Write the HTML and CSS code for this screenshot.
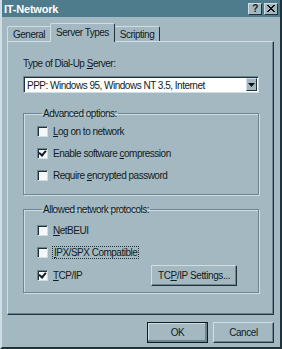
FILE: index.html
```html
<!DOCTYPE html>
<html lang="en">
<head>
  <meta charset="UTF-8" />
  <title>IT-Network</title>
  <link rel="stylesheet" href="styles.css">
</head>
<body>
  <div class="window">
    <div class="titlebar">
      <span class="title">IT-Network</span>
      <div class="title-btns">
        <span class="tbtn">?</span>
        <span class="tbtn">
          <svg width="8" height="7" viewBox="0 0 8 7"><path d="M0 0L7 7M1 0L8 7M7 0L0 7M8 0L1 7" stroke="#111" stroke-width="1"/></svg>
        </span>
      </div>
    </div>

    <div class="tabs">
      <div class="tab">General</div>
      <div class="tab active">Server Types</div>
      <div class="tab">Scripting</div>
    </div>

    <div class="panel">
      <div class="field-label">Type of Dial-Up <u>S</u>erver:</div>
      <div class="combo">
        <span class="combo-text">PPP: Windows 95, Windows NT 3.5, Internet</span>
        <span class="combo-btn">
          <svg width="7" height="4" viewBox="0 0 7 4"><path d="M0 0H7L3.5 4Z" fill="#111"/></svg>
        </span>
      </div>

      <fieldset class="group group-adv">
        <legend>Advanced options:</legend>
        <label class="check-row"><span class="check"></span><span><u>L</u>og on to network</span></label>
        <label class="check-row"><span class="check checked"></span><span>Enable software <u>c</u>ompression</span></label>
        <label class="check-row"><span class="check"></span><span>Require <u>e</u>ncrypted password</span></label>
      </fieldset>

      <fieldset class="group group-proto">
        <legend>Allowed network protocols:</legend>
        <label class="check-row"><span class="check"></span><span><u>N</u>etBEUI</span></label>
        <label class="check-row"><span class="check"></span><span class="focus"><u>I</u>PX/SPX Compatible</span></label>
        <div class="proto-last">
          <label class="check-row"><span class="check checked"></span><span><u>T</u>CP/IP</span></label>
          <button class="btn settings-btn">TC<u>P</u>/IP Settings...</button>
        </div>
      </fieldset>
    </div>

    <div class="actions">
      <button class="btn default">OK</button>
      <button class="btn">Cancel</button>
    </div>
  </div>
</body>
</html>
```

FILE: styles.css
```css
* {
  box-sizing: border-box;
}
body {
  margin: 0;
  font-family: "Liberation Sans", Arial, sans-serif;
  font-size: 10px;
  letter-spacing: -0.5px;
  color: #101c22;
  background: #a4b8c2;
}
.window {
  width: 282px;
  height: 349px;
  background: #a4b8c2;
  border-left: 2px solid #d0dde3;
  border-right: 2px solid #22323a;
  border-bottom: 2px solid #22323a;
  display: flex;
  flex-direction: column;
}
.titlebar {
  height: 17px;
  background: #4e7c8c;
  display: flex;
  align-items: center;
  justify-content: space-between;
  padding: 0 2px 0 2px;
}
.title {
  color: #fff;
  font-weight: bold;
  font-size: 11px;
  letter-spacing: -0.2px;
}
.title-btns {
  display: flex;
  gap: 2px;
}
.tbtn {
  width: 14px;
  height: 12px;
  background: #a4b8c2;
  border: 1px solid;
  border-color: #d0dde3 #22323a #22323a #d0dde3;
  display: flex;
  align-items: center;
  justify-content: center;
  font-weight: bold;
  font-size: 10px;
  line-height: 1;
}

/* tabs */
.tabs {
  display: flex;
  align-items: flex-end;
  height: 24px;
  margin-left: 5px;
}
.tab {
  height: 15px;
  padding: 1px 5px 0 5px;
  border: 1px solid;
  border-bottom: none;
  border-color: #d0dde3 #22323a #d0dde3 #d0dde3;
  border-radius: 2px 2px 0 0;
  line-height: 13px;
}
.tab.active {
  height: 19px;
  margin: 0 -1px -1px -1px;
  padding: 2px 5px 0 5px;
  background: #a4b8c2;
  position: relative;
  z-index: 1;
}

.panel {
  margin: 0 6px 0 5px;
  height: 274px;
  border: 1px solid;
  border-color: #d0dde3 #22323a #22323a #d0dde3;
  box-shadow: inset -1px -1px #6c8591;
  padding: 15px 15px 0 15px;
  display: flex;
  flex-direction: column;
}
.field-label {
  line-height: 13px;
  margin-bottom: 6px;
}
u {
  text-decoration-thickness: 1px;
}
.combo {
  height: 17px;
  width: 236px;
  display: flex;
  align-items: center;
  background: #fff;
  border: 1px solid;
  border-color: #6c8591 #d0dde3 #d0dde3 #6c8591;
  box-shadow: inset 1px 1px #22323a;
  padding: 1px 1px 1px 3px;
}
.combo-text {
  flex: 1;
  padding-top: 1px;
}
.combo-btn {
  width: 11px;
  height: 13px;
  background: #a4b8c2;
  border: 1px solid;
  border-color: #d0dde3 #22323a #22323a #d0dde3;
  display: flex;
  align-items: center;
  justify-content: center;
}

.group {
  margin: 0;
  width: 236px;
  border: 1px solid #6c8591;
  box-shadow: inset 1px 1px #d0dde3, 1px 1px #d0dde3;
  padding: 0 0 0 13px;
}
.group legend {
  padding: 0 1px;
  margin-left: 5px;
  line-height: 13px;
}
.group-adv {
  margin-top: 14px;
  height: 88px;
}
.group-proto {
  margin-top: 8px;
  height: 90px;
  padding-top: 3px;
}
.check-row {
  display: flex;
  align-items: center;
  gap: 5px;
  height: 22px;
}
.check {
  width: 11px;
  height: 11px;
  background: #f4f8f8;
  border: 1px solid;
  border-color: #6c8591 #d0dde3 #d0dde3 #6c8591;
  box-shadow: inset 1px 1px #22323a;
  position: relative;
}
.check.checked::after {
  content: "";
  position: absolute;
  left: 2px;
  top: 0;
  width: 3px;
  height: 5px;
  border: solid #101c22;
  border-width: 0 2px 2px 0;
  transform: rotate(40deg);
}
.focus {
  outline: 1px dotted #22323a;
  outline-offset: 0;
  padding: 0 1px;
}
.proto-last {
  display: flex;
  align-items: center;
  justify-content: space-between;
  padding-right: 21px;
  margin-top: 1px;
}

.btn {
  font-family: "Liberation Sans", Arial, sans-serif;
  font-size: 10px;
  letter-spacing: -0.4px;
  color: #101c22;
  background: #a4b8c2;
  border: 1px solid;
  border-color: #d0dde3 #22323a #22323a #d0dde3;
  box-shadow: inset -1px -1px #6c8591;
  padding: 0;
}
.settings-btn {
  width: 86px;
  height: 21px;
}
.actions {
  display: flex;
  justify-content: flex-end;
  gap: 5px;
  padding: 7px 6px 0 0;
}
.actions .btn {
  width: 61px;
  height: 21px;
}
.actions .btn.default {
  outline: 1px solid #101c22;
  outline-offset: -1px;
  box-shadow: inset -2px -2px #6c8591, inset 1px 1px #d0dde3;
}
```
